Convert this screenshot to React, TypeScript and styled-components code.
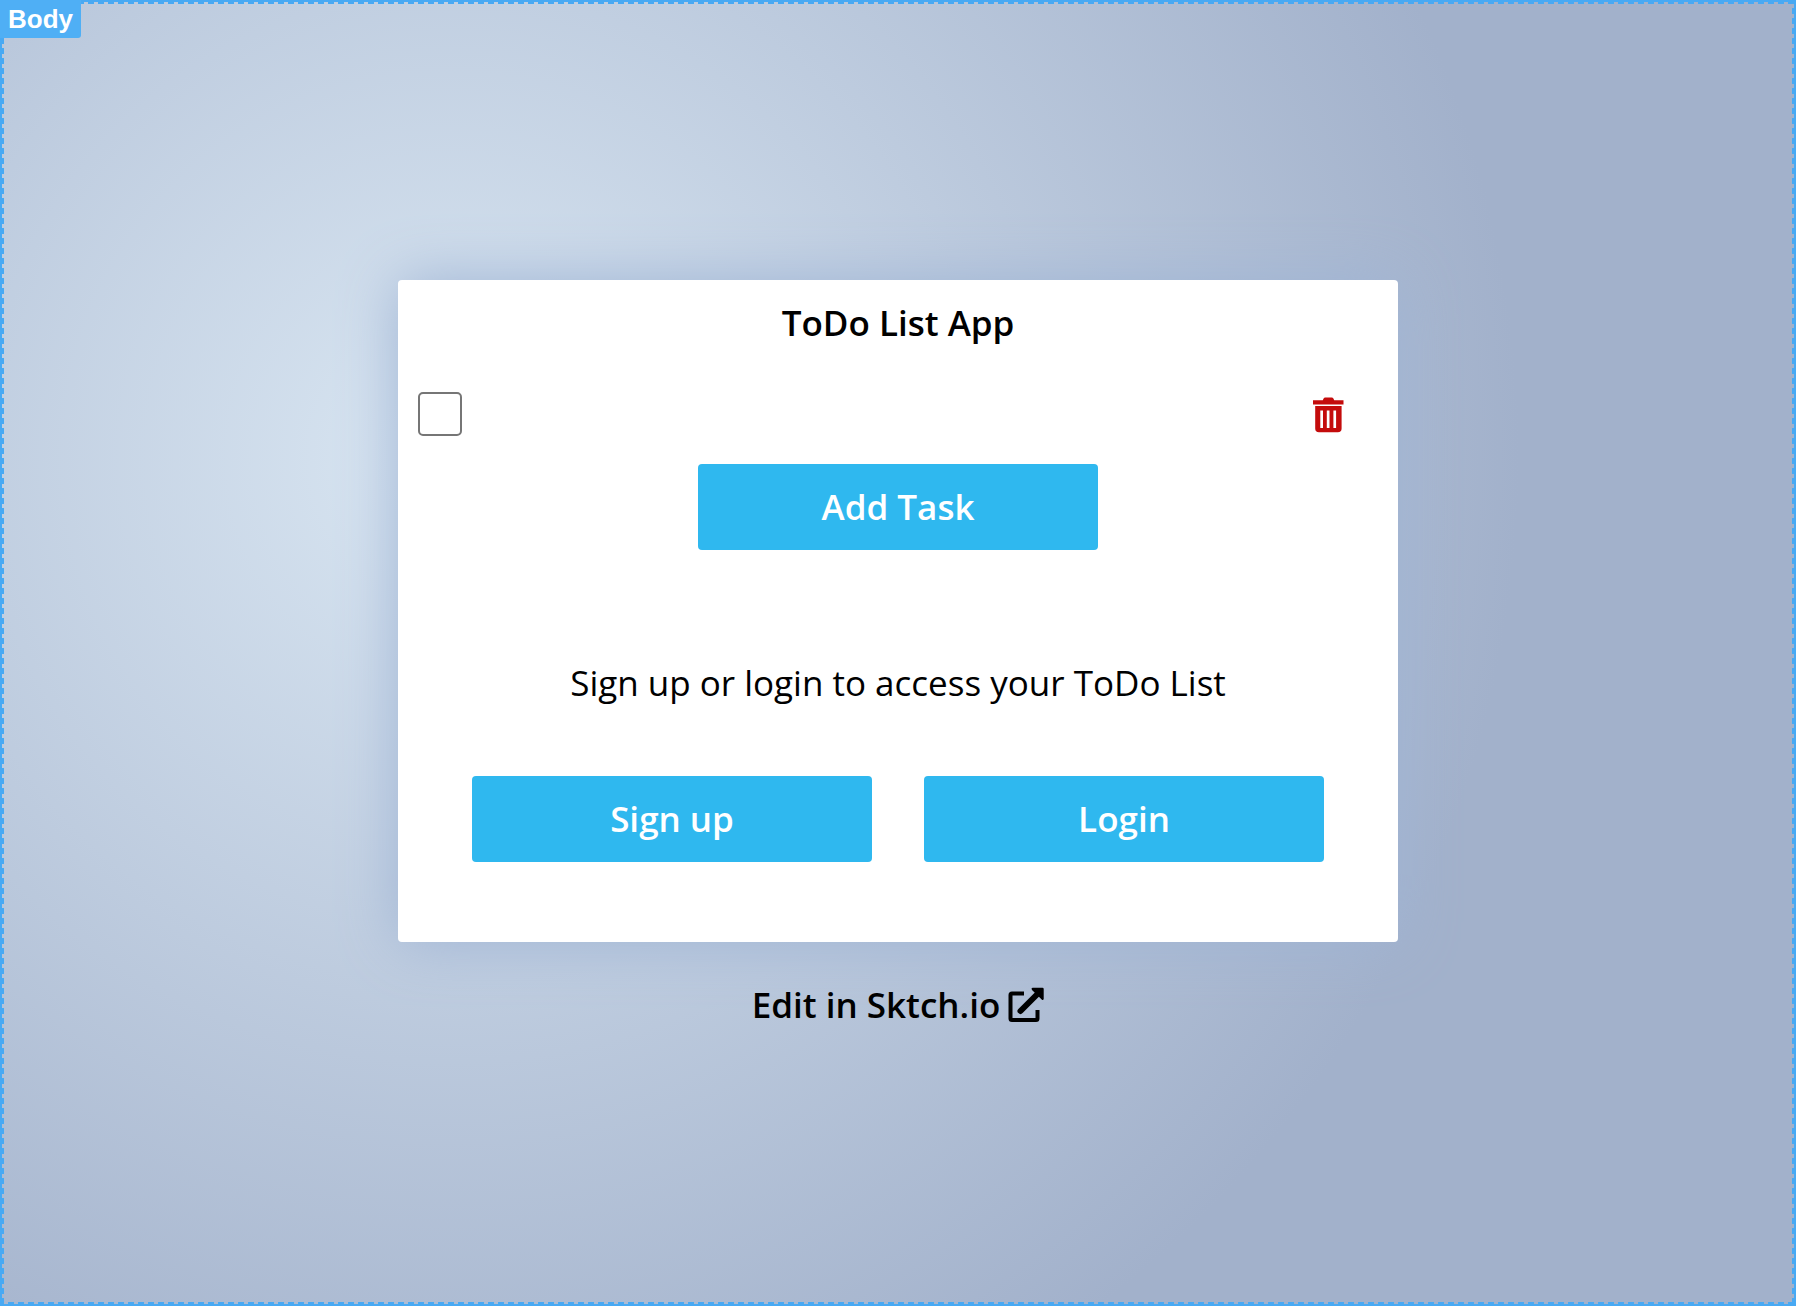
import React from "react";
import styled, { createGlobalStyle } from "styled-components";

const GlobalStyle = createGlobalStyle`
  *, *::before, *::after { box-sizing: border-box; }
  body { margin: 0; font-family: "Open Sans", sans-serif; color: #000; }
`;

const Page = styled.div`
  position: relative;
  min-height: 100vh;
  display: flex;
  flex-direction: column;
  align-items: center;
  padding: 280px 20px 40px;
  background: radial-gradient(circle 1070px at 25% 35%, #d9e6f2 0%, #a2b1cb 100%);
`;

const Outline = styled.div`
  position: absolute;
  inset: 0;
  border: 2px solid #48a9f3;
  pointer-events: none;

  &::after {
    --dash: #48a9f3 0 2px, transparent 2px 6px, #48a9f3 6px 10px;
    content: "";
    position: absolute;
    inset: 0;
    background:
      repeating-linear-gradient(90deg, var(--dash)) top / 100% 2px no-repeat,
      repeating-linear-gradient(90deg, var(--dash)) bottom / 100% 2px no-repeat,
      repeating-linear-gradient(180deg, var(--dash)) left / 2px 100% no-repeat,
      repeating-linear-gradient(180deg, var(--dash)) right / 2px 100% no-repeat;
  }
`;

const Tag = styled.span`
  position: absolute;
  top: 0;
  left: 0;
  padding: 4px 8px;
  border-radius: 0 0 3px 0;
  background: #4faff5;
  color: #fff;
  font: bold 26px/30px "Liberation Sans", sans-serif;
`;

const Card = styled.main`
  width: 100%;
  max-width: 1000px;
  padding: 20px 20px 80px;
  border-radius: 4px;
  background: #fff;
  box-shadow: 0 0 60px #9fb4d4;
`;

const Title = styled.h1`
  margin: 0;
  font-size: 35px;
  line-height: 46px;
  font-weight: 600;
  text-align: center;
`;

const TaskRow = styled.div`
  display: flex;
  align-items: center;
  justify-content: space-between;
  margin-top: 46px;
  padding-right: 34px;
`;

const Check = styled.input`
  appearance: none;
  width: 44px;
  height: 44px;
  margin: 0;
  border: 2px solid #767676;
  border-radius: 5px;
  background: #fff;

  &:checked { background: #2fb8ef; }
`;

const DeleteButton = styled.button`
  display: flex;
  padding: 0;
  border: 0;
  background: none;
  color: #c40c0c;
  cursor: pointer;
`;

const Actions = styled.div`
  display: flex;
  flex-wrap: wrap;
  justify-content: center;
  gap: 20px 52px;
`;

const AddAction = styled(Actions)`
  margin-top: 28px;
`;

const AccountActions = styled(Actions)`
  margin-top: 70px;
`;

const Button = styled.button`
  width: 400px;
  height: 86px;
  border: 0;
  border-radius: 4px;
  background: #2fb8ef;
  color: #fff;
  font: 600 35px/46px "Open Sans", sans-serif;
  cursor: pointer;
`;

const Prompt = styled.p`
  margin: 110px 0 0;
  font-size: 35px;
  line-height: 46px;
  text-align: center;
`;

const EditLink = styled.a`
  display: flex;
  align-items: center;
  gap: 8px;
  margin-top: 40px;
  color: #000;
  font-size: 35px;
  line-height: 46px;
  font-weight: 600;
  text-decoration: none;
`;

const TrashIcon = () => (
  <svg width="32" height="38" viewBox="0 0 32 38" fill="currentColor" aria-hidden="true">
    <path d="M1 5.200h9.800l.8-1.800q.5-1 1.600-1h6.600q1.100 0 1.600 1l.8 1.800H31.500v4.200H1z" />
    <path fillRule="evenodd" d="M3.200 11h26.400v22.500q0 3.800-3.800 3.800H7q-3.800 0-3.800-3.800zM8.300 15.500v17.500h2.700V15.500zm6.500 0v17.500h2.700V15.500zm6.600 0v17.500h2.700V15.500z" />
  </svg>
);

const ExternalIcon = () => (
  <svg width="36" height="36" viewBox="0 0 36 36" aria-hidden="true">
    <path d="M16 6.500H4Q2.500 6.500 2.500 8v23.500q0 1.500 1.500 1.500h24q1.500 0 1.500-1.500V23" fill="none" stroke="currentColor" strokeWidth="4" />
    <path d="M12.500 24 30 6.500" fill="none" stroke="currentColor" strokeWidth="6" strokeLinecap="round" />
    <path d="M24.500.8H34.500q1.200 0 1.200 1.200v10q-.5 1.800-2 .5L24 3q-1.300-1.700.5-2.200z" fill="currentColor" />
  </svg>
);

export default function App() {
  return (
    <>
      <GlobalStyle />
      <Page>
        <Card>
          <Title>ToDo List App</Title>
          <TaskRow>
            <Check type="checkbox" aria-label="Task done" />
            <DeleteButton type="button" aria-label="Delete task"><TrashIcon /></DeleteButton>
          </TaskRow>
          <AddAction><Button type="button">Add Task</Button></AddAction>
          <Prompt>Sign up or login to access your ToDo List</Prompt>
          <AccountActions>
            <Button type="button">Sign up</Button>
            <Button type="button">Login</Button>
          </AccountActions>
        </Card>
        <EditLink href="#edit">Edit in Sktch.io <ExternalIcon /></EditLink>
        <Outline />
        <Tag>Body</Tag>
      </Page>
    </>
  );
}
